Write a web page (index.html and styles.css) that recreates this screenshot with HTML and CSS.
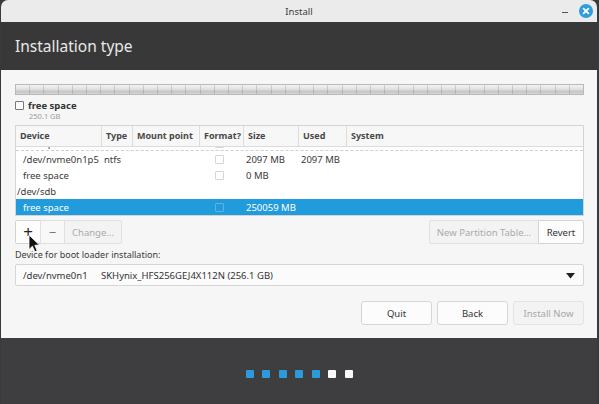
FILE: index.html
```html
<!DOCTYPE html>
<html>
<head>
<meta charset="utf-8">
<link rel="stylesheet" href="styles.css">
</head>
<body>
<div class="window">
  <div class="titlebar">
    <span></span>
    <span class="title">Install</span>
    <div class="controls">
      <span class="min"></span>
      <span class="close">
        <svg width="14" height="14" viewBox="0 0 14 14"><circle cx="7" cy="7" r="7" fill="#2d9ddf"/><path d="M4.6 4.6 L9.4 9.4 M9.4 4.6 L4.6 9.4" stroke="#fff" stroke-width="1.8" stroke-linecap="round"/></svg>
      </span>
    </div>
  </div>
  <div class="header"><h1>Installation type</h1></div>
  <div class="content">
    <div class="diskbar"></div>
    <div class="legend">
      <span class="cb legend-cb"></span>
      <div>
        <div class="legend-name">free space</div>
        <div class="legend-size">250.1 GB</div>
      </div>
    </div>
    <div class="table">
      <div class="row thead">
        <div class="cell">Device</div>
        <div class="cell">Type</div>
        <div class="cell">Mount point</div>
        <div class="cell">Format?</div>
        <div class="cell">Size</div>
        <div class="cell">Used</div>
        <div class="cell">System</div>
      </div>
      <div class="tbody">
        <div class="row trow clipped focus">
          <div class="cell dev sub">free space</div>
          <div class="cell"></div>
          <div class="cell"></div>
          <div class="cell fmt"><span class="cb"></span></div>
          <div class="cell">1 MB</div>
          <div class="cell"></div>
          <div class="cell"></div>
        </div>
        <div class="row trow">
          <div class="cell dev sub">/dev/nvme0n1p5</div>
          <div class="cell">ntfs</div>
          <div class="cell"></div>
          <div class="cell fmt"><span class="cb"></span></div>
          <div class="cell">2097 MB</div>
          <div class="cell">2097 MB</div>
          <div class="cell"></div>
        </div>
        <div class="row trow">
          <div class="cell dev sub">free space</div>
          <div class="cell"></div>
          <div class="cell"></div>
          <div class="cell fmt"><span class="cb"></span></div>
          <div class="cell">0 MB</div>
          <div class="cell"></div>
          <div class="cell"></div>
        </div>
        <div class="row trow">
          <div class="cell dev">/dev/sdb</div>
          <div class="cell"></div>
          <div class="cell"></div>
          <div class="cell"></div>
          <div class="cell"></div>
          <div class="cell"></div>
          <div class="cell"></div>
        </div>
        <div class="row trow selected">
          <div class="cell dev sub">free space</div>
          <div class="cell"></div>
          <div class="cell"></div>
          <div class="cell fmt"><span class="cb"></span></div>
          <div class="cell">250059 MB</div>
          <div class="cell"></div>
          <div class="cell"></div>
        </div>
      </div>
    </div>
    <div class="toolbar">
      <div class="btn-group">
        <button class="tbtn plus">+</button>
        <button class="tbtn minus disabled">−</button>
        <button class="tbtn change disabled">Change...</button>
      </div>
      <div class="btn-group">
        <button class="tbtn newtable disabled">New Partition Table...</button>
        <button class="tbtn revert">Revert</button>
      </div>
    </div>
    <div class="label">Device for boot loader installation:</div>
    <div class="combo">
      <span class="combo-dev">/dev/nvme0n1</span>
      <span class="combo-name">SKHynix_HFS256GEJ4X112N (256.1 GB)</span>
      <svg class="combo-arrow" width="9" height="6" viewBox="0 0 9 6"><path d="M0 0 H9 L4.5 5.5 Z" fill="#222"/></svg>
    </div>
    <div class="actions">
      <button class="abtn">Quit</button>
      <button class="abtn">Back</button>
      <button class="abtn disabled">Install Now</button>
    </div>
  </div>
  <div class="footer">
    <div class="dots">
      <span class="dot on"></span><span class="dot on"></span><span class="dot on"></span><span class="dot on"></span><span class="dot on"></span><span class="dot"></span><span class="dot"></span>
    </div>
  </div>
</div>
<svg class="cursor" width="13" height="19" viewBox="0 0 13 19"><path d="M1 1 L1 15.5 L4.4 12.2 L6.9 17.8 L9.2 16.8 L6.8 11.3 L11.4 11 Z" fill="#111" stroke="#fff" stroke-width="0.8" stroke-linejoin="round"/></svg>
</body>
</html>
```
FILE: styles.css
```css
* { box-sizing: border-box; }
body {
  margin: 0;
  width: 599px;
  height: 404px;
  overflow: hidden;
  position: relative;
  background: #3a393b;
  font-family: "Noto Sans", "DejaVu Sans", sans-serif;
  color: #333;
}
.window {
  width: 596px;
  margin-left: 1px;
}
.titlebar {
  height: 22px;
  background: #ebebeb;
  border-radius: 7px 7px 0 0;
  display: grid;
  grid-template-columns: 1fr auto 1fr;
  align-items: center;
}
.title {
  font-size: 9.5px;
  color: #3c3c3c;
}
.controls {
  justify-self: end;
  display: flex;
  align-items: center;
  gap: 11px;
  padding-right: 4px;
}
.min {
  width: 6px;
  height: 1px;
  background: #555;
  margin-top: 2px;
}
.close { display: flex; }
.header {
  height: 48px;
  background: #383838;
  display: flex;
  align-items: center;
  padding-left: 14px;
}
.header h1 {
  margin: 0;
  font-size: 15.5px;
  font-weight: normal;
  color: #e8e8e8;
  padding-bottom: 1px;
}
.content {
  height: 268px;
  background: #f6f6f6;
  padding: 14px 13px 0 14px;
}
.diskbar {
  height: 11px;
  border: 1px solid #b9b9b9;
  background:
    repeating-linear-gradient(90deg, transparent 0 13.2px, rgba(0,0,0,0.13) 13.2px 14.2px),
    linear-gradient(#f3f3f3 0%, #e2e2e2 45%, #c4c4c4 75%, #d8d8d8 100%);
}
.legend {
  display: flex;
  align-items: flex-start;
  gap: 4px;
  margin-top: 5px;
}
.cb {
  display: inline-block;
  width: 9px;
  height: 9px;
  border: 1px solid #d6d6d6;
  background: #fff;
  border-radius: 1px;
}
.legend-cb {
  border-color: #777;
  background: #fbfbfb;
  margin-top: 1px;
}
.legend-name {
  font-size: 9.5px;
  font-weight: bold;
  color: #333;
  line-height: 12px;
}
.legend-size {
  font-size: 7.5px;
  color: #9a9a9a;
  line-height: 9px;
  padding-left: 1px;
}
.table {
  margin-top: 4px;
  border: 1px solid #d4d4d4;
  background: #fff;
}
.row {
  display: grid;
  grid-template-columns: 86px 31px 67px 44px 55px 48px 1fr;
  align-items: center;
}
.thead {
  height: 21px;
  background: #f7f7f7;
  border-bottom: 1px solid #dcdcdc;
  font-size: 9px;
  font-weight: bold;
  color: #474747;
}
.thead .cell {
  height: 20px;
  line-height: 20px;
  padding-left: 4px;
  border-right: 1px solid #dcdcdc;
}
.thead .cell:last-child { border-right: none; }
.tbody {
  height: 68px;
  overflow: hidden;
}
.trow {
  height: 16px;
  font-size: 9.5px;
  color: #3a3a3a;
  line-height: 16px;
  padding-top: 1px;
}
.trow .cell {
  padding-left: 2px;
  white-space: nowrap;
  height: 15px;
  display: flex;
  align-items: center;
}
.trow .dev { padding-left: 1px; }
.trow .dev.sub { padding-left: 7px; }
.trow .fmt { padding-left: 15px; }
.trow.clipped { margin-top: -12px; }
.trow.focus { border-bottom: 1px dashed #cfcfcf; }
.trow.selected {
  background: #229bdc;
  color: #fff;
}
.trow.selected .cb {
  background: #229bdc;
  border-color: #58b5e6;
}
.toolbar {
  margin-top: 4px;
  display: flex;
  justify-content: space-between;
}
.btn-group { display: flex; }
button {
  font-family: inherit;
  margin: 0;
}
.tbtn {
  height: 24px;
  border: 1px solid #d8d8d8;
  background: #fdfdfd;
  font-size: 9.5px;
  color: #333;
  padding: 0;
  margin-left: -1px;
}
.tbtn:first-child { margin-left: 0; }
.tbtn.disabled {
  background: #f3f3f3;
  color: #aaa;
  border-color: #e0e0e0;
}
.plus {
  width: 26px;
  font-size: 17px;
  color: #222;
  line-height: 1;
  padding-bottom: 1px;
  border-color: #d2d2d2;
  border-radius: 2px 0 0 2px;
}
.minus {
  width: 25px;
  font-size: 13px;
  background: #f8f8f8 !important;
  color: #777 !important;
}
.change { width: 58px; border-radius: 0 2px 2px 0; }
.newtable { width: 110px; border-radius: 2px 0 0 2px; }
.revert { width: 46px; border-radius: 0 2px 2px 0; border-color: #d2d2d2; }
.label {
  margin-top: 5px;
  font-size: 9px;
  line-height: 12px;
  color: #3a3a3a;
}
.combo {
  margin-top: 3px;
  height: 22px;
  border: 1px solid #d6d6d6;
  border-radius: 2px;
  background: #fbfbfb;
  display: flex;
  align-items: center;
  padding: 0 8px 0 7px;
  font-size: 9.5px;
  color: #333;
}
.combo-dev { width: 78px; }
.combo-name { flex: 1; }
.combo-arrow { margin-top: 1px; }
.actions {
  margin-top: 15px;
  display: flex;
  justify-content: flex-end;
  gap: 5px;
}
.abtn {
  width: 71px;
  height: 24px;
  border: 1px solid #d6d6d6;
  border-radius: 3px;
  background: #fcfcfc;
  font-size: 9.5px;
  color: #333;
  padding: 0;
}
.abtn.disabled {
  background: #f3f3f3;
  border-color: #e4e4e4;
  color: #a8a8a8;
}
.footer {
  height: 66px;
  background: #3e3d3f;
  display: flex;
  justify-content: center;
  padding-top: 32px;
}
.dots {
  display: flex;
  gap: 8.5px;
  height: 8px;
}
.dot {
  width: 8px;
  height: 8px;
  border-radius: 1px;
  background: #fafafa;
}
.dot.on { background: #2a9bdb; }
.cursor {
  position: absolute;
  left: 28px;
  top: 234px;
}
```
